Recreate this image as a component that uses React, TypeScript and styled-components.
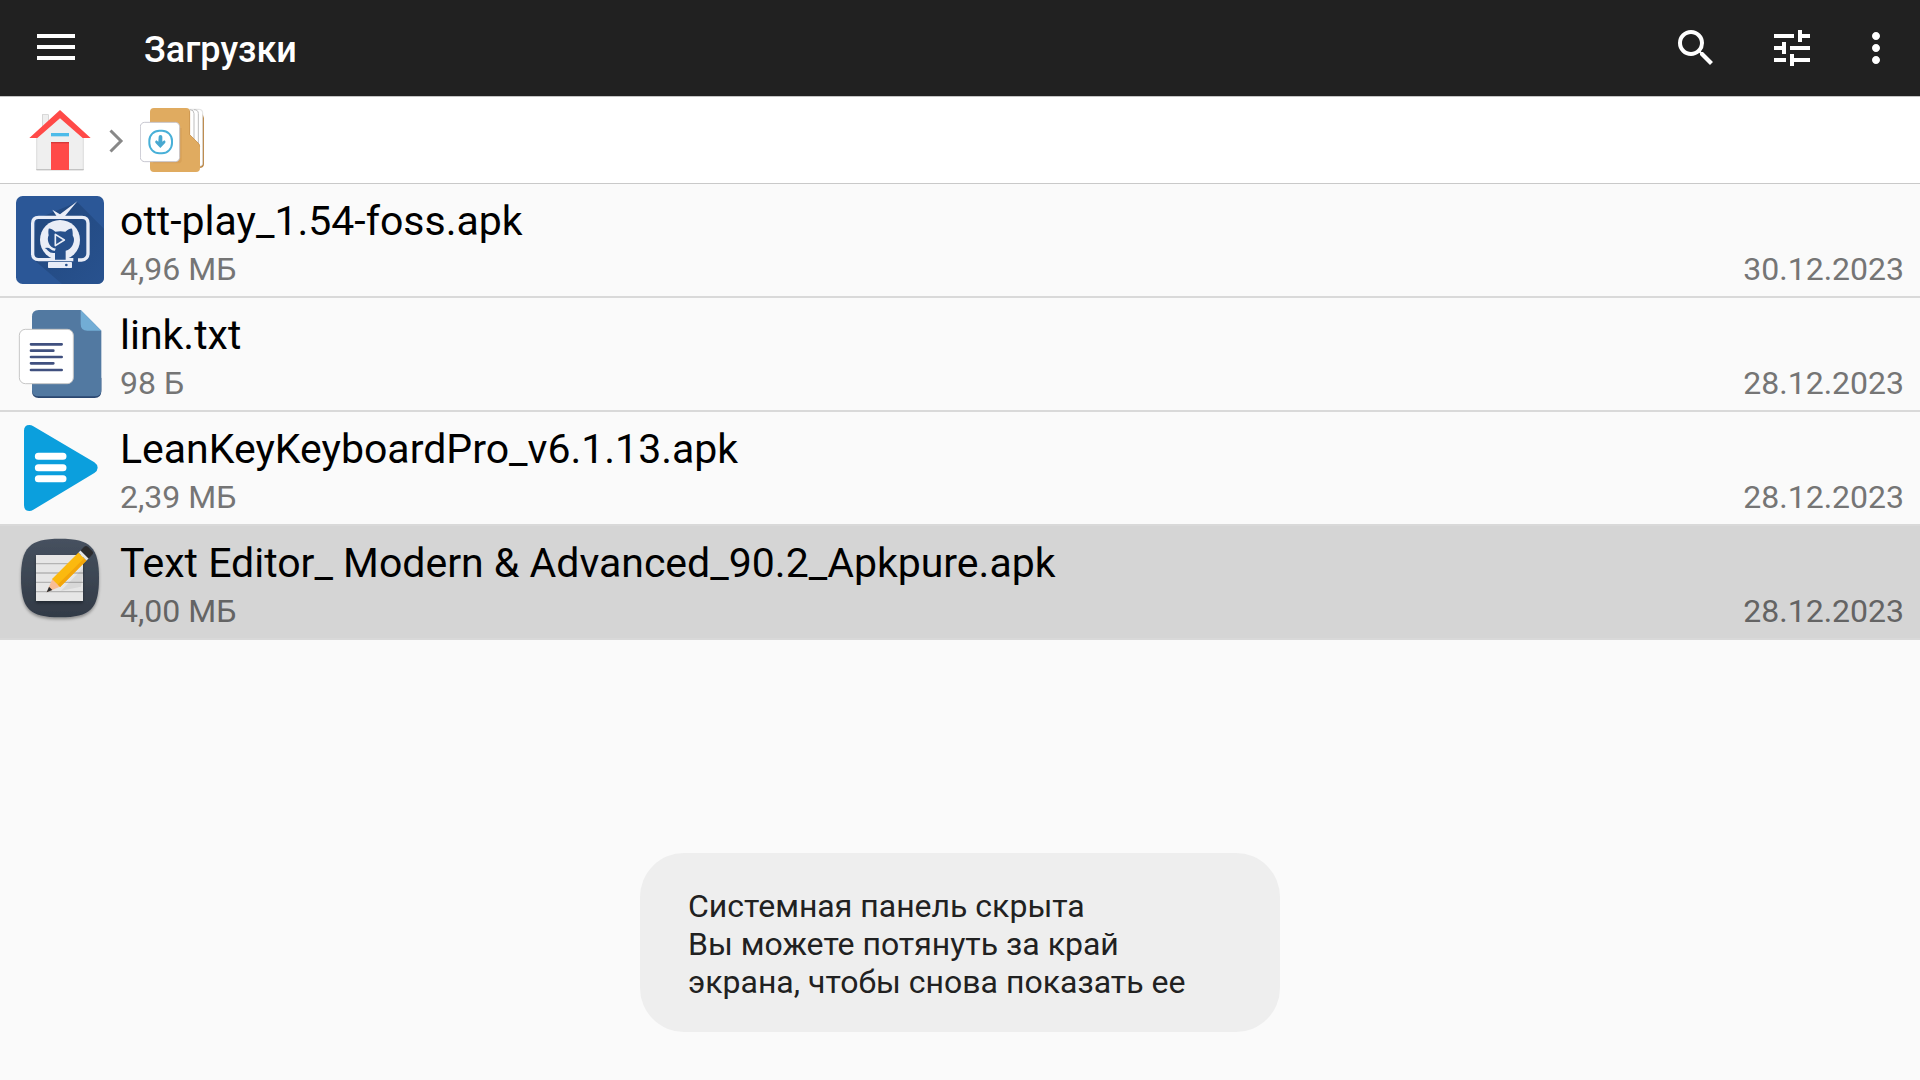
import React from "react";
import styled, { createGlobalStyle } from "styled-components";
import { MdMoreVert, MdSearch, MdTune } from "react-icons/md";

const GlobalStyle = createGlobalStyle`
  *, *::before, *::after { box-sizing: border-box; }
  body {
    margin: 0;
    background: #fafafa;
    color: #000;
    font-family: Roboto, "Noto Sans", sans-serif;
  }
`;

const Page = styled.div`
  display: flex;
  flex-direction: column;
  min-height: 100vh;
`;

const Toolbar = styled.header`
  display: flex;
  align-items: stretch;
  height: 97px;
  padding-right: 8px;
  background: #212121;
  border-bottom: 1px solid #c4c4c4;
  color: #fff;
`;

const ToolButton = styled.button<{ $width: number }>`
  display: flex;
  align-items: center;
  justify-content: center;
  width: ${(p) => p.$width}px;
  padding: 0;
  border: 0;
  background: none;
  color: inherit;
  cursor: pointer;
`;

const Title = styled.h1`
  flex: 1;
  align-self: center;
  margin: 0;
  padding: 4px 32px 0;
  font-size: 36px;
  font-weight: 500;
  line-height: 42px;
`;

const Breadcrumbs = styled.nav`
  display: flex;
  align-items: center;
  height: 87px;
  padding: 0 28px;
  background: #fff;
  border-bottom: 1px solid #c9c9c9;
  color: #888;
`;

const Crumb = styled.a`
  display: flex;
`;

const FileList = styled.ul`
  margin: 0;
  padding: 0;
  list-style: none;
`;

const FileItem = styled.li<{ $selected?: boolean }>`
  background: ${(p) => (p.$selected ? "#d5d5d5" : "#fafafa")};
  border-bottom: 2px solid #d9d9d9;
`;

const FileLink = styled.a`
  display: flex;
  gap: 16px;
  padding: 12px 16px 3px;
  color: inherit;
  text-decoration: none;
`;

const FileText = styled.div`
  flex: 1;
  min-width: 0;
  padding-top: 1px;
`;

const FileName = styled.div`
  font-size: 41px;
  line-height: 48px;
  white-space: nowrap;
  overflow: hidden;
  text-overflow: ellipsis;
`;

const FileMeta = styled.div<{ $selected?: boolean }>`
  display: flex;
  justify-content: space-between;
  font-size: 32px;
  line-height: 48px;
  color: ${(p) => (p.$selected ? "#646464" : "#757575")};
`;

const Toast = styled.div`
  position: fixed;
  left: 50%;
  bottom: 48px;
  transform: translateX(-50%);
  width: 640px;
  max-width: 100%;
  padding: 34px 48px 31px;
  border-radius: 44px;
  background: #eee;
  color: #212121;
  font-size: 32px;
  line-height: 38px;
`;

const MenuIcon = () => (
  <svg width="38" height="28" viewBox="0 0 38 28" fill="currentColor" aria-hidden="true">
    <rect width="38" height="4" />
    <rect y="11" width="38" height="4" />
    <rect y="22" width="38" height="4" />
  </svg>
);

const ChevronIcon = () => (
  <svg width="48" height="48" viewBox="0 0 48 48" fill="none" aria-hidden="true">
    <path d="M18.500 14.500 29 25 18.500 35.500" stroke="currentColor" strokeWidth="3" />
  </svg>
);

const HomeIcon = () => (
  <svg width="64" height="64" viewBox="0 0 192 192" aria-hidden="true">
    <rect x="43" y="20" width="18" height="50" fill="#efefef" stroke="#c8c8c8" strokeWidth="2" />
    <path d="M26 86 96 22l70 64v100H26z" fill="#efefef" />
    <path d="M26 88v98h140V88" fill="none" stroke="#cfcfcf" strokeWidth="2" />
    <path d="M25 185h142" stroke="#bdbdbd" strokeWidth="3" />
    <path d="M96 6l92 84h-24L96 31 28 90H4z" fill="#ff4a48" />
    <rect x="69" y="75" width="54" height="10" fill="#4dbbe9" />
    <rect x="69" y="102" width="54" height="84" fill="#ff4a48" />
    <rect x="69" y="102" width="54" height="4" fill="#d63a3a" />
  </svg>
);

const DownloadsIcon = () => (
  <svg width="64" height="64" viewBox="0 0 192 192" aria-hidden="true">
    <path d="M150 16h34q8 6 8 14v138q0 12-14 12h-28z" fill="#bd8743" />
    <path d="M140 4h38q10 0 10 10v152q0 9-9 9h-39z" fill="#fff" stroke="#cfcfcf" strokeWidth="2" />
    <path d="M150 5q12 0 12 12v80M162 5q13 0 13 12v100" fill="none" stroke="#bdbdbd" strokeWidth="3" />
    <path d="M30 180v-168q0-12 12-12h96q12 0 12 12v68l26 26q4 4 4 10v64q0 12-12 12h-126q-12 0-12-12z" fill="#e0ab60" />
    <path d="M149 8v72l27 27q3 4 3 9" fill="none" stroke="#c48d49" strokeWidth="2" />
    <path d="M119 60h6v98q-2 8-12 8H40v-5h70z" fill="#cf9850" opacity=".5" />
    <rect x="1" y="43" width="118" height="118" rx="13" fill="#fff" stroke="#bcbcc6" strokeWidth="2.5" />
    <rect x="28" y="68" width="68" height="68" rx="30" fill="none" stroke="#48b0d8" strokeWidth="6" />
    <path d="M56 86q0-5 5.500-5t5.500 5v15l6-4q5 2 3 7l-15 16-15-16q-2-5 3-7l6 4z" fill="#48a8d0" />
  </svg>
);

const OttPlayIcon = () => (
  <svg width="88" height="88" viewBox="0 0 264 264" aria-hidden="true">
    <defs>
      <linearGradient id="ottShade" x1="0" y1="0" x2="1" y2="1">
        <stop offset="0.3" stopColor="#234a82" />
        <stop offset="1" stopColor="#28528f" />
      </linearGradient>
    </defs>
    <rect width="264" height="264" rx="20" fill="#2b5797" />
    <path d="M184 18l80 80v146q0 20-20 20H138L50 188 60 70z" fill="url(#ottShade)" />
    <path d="M109 41l23 14 52-39-40 48h-20z" fill="#e9edf7" />
    <path d="M172 191H68q-18 0-18-18V82q0-18 18-18h130q18 0 18 18v90q0 18-20 20h-10" fill="none" stroke="#e9edf7" strokeWidth="10" />
    <circle cx="132" cy="132" r="60" fill="#e9edf7" />
    <path d="M98 98q6-2 20 9 15-3 30 0 14-11 20-9 3 10 2 20 8 14 0 29-7 14-21 17v27h-32v-20q-14 2-21-7-5-6-10-8 12-3 17 3 6 6 14 5 0-4 3-6-17-3-22-17-5-12 0-23-2-10 0-20z" fill="#27508c" />
    <path d="M118 115l27 17-27 17z" fill="none" stroke="#e9edf7" strokeWidth="5" strokeLinejoin="round" />
    <rect x="96" y="198" width="72" height="18" rx="2" fill="#e9edf7" />
    <circle cx="151" cy="207" r="4" fill="#27508c" />
  </svg>
);

const TextFileIcon = () => (
  <svg width="88" height="88" viewBox="0 0 264 264" aria-hidden="true">
    <path d="M48 40v204q0 20 20 20h168q20 0 20-20v-40z" fill="#2b4770" />
    <path d="M48 20Q48 0 68 0h126l62 62v178q0 19-20 19H68q-20 0-20-19z" fill="#5279a1" />
    <path d="M194 0l62 62h-42q-20 0-20-20z" fill="#72add5" />
    <rect x="10" y="58" width="162" height="163" rx="18" fill="#fff" stroke="#c6c6c6" strokeWidth="3" />
    <path d="M45 103h92M45 122h67M45 141h92M45 160h67M45 180h92" stroke="#40507f" strokeWidth="8" strokeLinecap="round" />
  </svg>
);

const LeanKeyIcon = () => (
  <svg width="88" height="88" viewBox="0 0 264 264" aria-hidden="true">
    <path d="M24 20q0-17 16-17 6 0 12 4l183 108q10 7 10 16t-10 16L52 257q-6 4-12 4-16 0-16-17z" fill="#0b9fdd" />
    <path d="M67 97h74M67 131h74M67 164h74" stroke="#fff" strokeWidth="21" strokeLinecap="round" />
  </svg>
);

const TextEditorIcon = () => (
  <svg width="88" height="88" viewBox="0 0 264 264" aria-hidden="true">
    <defs>
      <linearGradient id="editorBase" x1="0" y1="0" x2="0" y2="1">
        <stop offset="0" stopColor="#46515f" />
        <stop offset="1" stopColor="#323a46" />
      </linearGradient>
      <filter id="editorShadow" x="-10%" y="-10%" width="120%" height="125%">
        <feDropShadow dx="0" dy="6" stdDeviation="4" floodColor="#000" floodOpacity="0.35" />
      </filter>
    </defs>
    <path d="M132 2c92 0 117 26 117 118s-25 118-117 118S15 212 15 120 40 2 132 2z" fill="url(#editorBase)" filter="url(#editorShadow)" />
    <rect x="60" y="51" width="141" height="138" fill="#e6e6e6" filter="url(#editorShadow)" />
    <path d="M60 77h141M60 105h141M60 133h141M60 161h141" stroke="#b4b4b4" strokeWidth="4" />
    <path d="M100 166l35-8 70-72-10 60z" fill="#000" opacity=".06" />
    <g transform="translate(92 163) rotate(-45)">
      <path d="M0 0l42-17v34z" fill="#f8bd96" />
      <path d="M0 0l17-7v14z" fill="#292c30" />
      <rect x="40" y="-17" width="112" height="34" fill="#fbb90f" />
      <rect x="40" y="7" width="112" height="10" fill="#f3a50a" />
      <rect x="152" y="-17" width="9" height="34" fill="#e4e4e4" />
      <path d="M161-17h15q8 0 8 8V9q0 8-8 8h-15z" fill="#2b2b2d" />
    </g>
  </svg>
);

type FileEntry = {
  name: string;
  size: string;
  date: string;
  icon: React.ReactNode;
  selected?: boolean;
};

const files: FileEntry[] = [
  { name: "ott-play_1.54-foss.apk", size: "4,96 МБ", date: "30.12.2023", icon: <OttPlayIcon /> },
  { name: "link.txt", size: "98 Б", date: "28.12.2023", icon: <TextFileIcon /> },
  { name: "LeanKeyKeyboardPro_v6.1.13.apk", size: "2,39 МБ", date: "28.12.2023", icon: <LeanKeyIcon /> },
  {
    name: "Text Editor_ Modern & Advanced_90.2_Apkpure.apk",
    size: "4,00 МБ",
    date: "28.12.2023",
    icon: <TextEditorIcon />,
    selected: true,
  },
];

export default function App() {
  return (
    <Page>
      <GlobalStyle />
      <Toolbar>
        <ToolButton $width={112} aria-label="Меню">
          <MenuIcon />
        </ToolButton>
        <Title>Загрузки</Title>
        <ToolButton $width={96} aria-label="Поиск">
          <MdSearch size={48} />
        </ToolButton>
        <ToolButton $width={96} aria-label="Настройки вида">
          <MdTune size={48} />
        </ToolButton>
        <ToolButton $width={72} aria-label="Ещё">
          <MdMoreVert size={48} />
        </ToolButton>
      </Toolbar>
      <Breadcrumbs aria-label="Путь">
        <Crumb href="#home" aria-label="Домой">
          <HomeIcon />
        </Crumb>
        <ChevronIcon />
        <Crumb href="#downloads" aria-label="Загрузки">
          <DownloadsIcon />
        </Crumb>
      </Breadcrumbs>
      <main>
        <FileList>
          {files.map((file) => (
            <FileItem key={file.name} $selected={file.selected}>
              <FileLink href="#file" aria-current={file.selected}>
                {file.icon}
                <FileText>
                  <FileName>{file.name}</FileName>
                  <FileMeta $selected={file.selected}>
                    <span>{file.size}</span>
                    <time>{file.date}</time>
                  </FileMeta>
                </FileText>
              </FileLink>
            </FileItem>
          ))}
        </FileList>
      </main>
      <Toast role="status">
        Системная панель скрыта
        <br />
        Вы можете потянуть за край экрана, чтобы снова показать ее
      </Toast>
    </Page>
  );
}
